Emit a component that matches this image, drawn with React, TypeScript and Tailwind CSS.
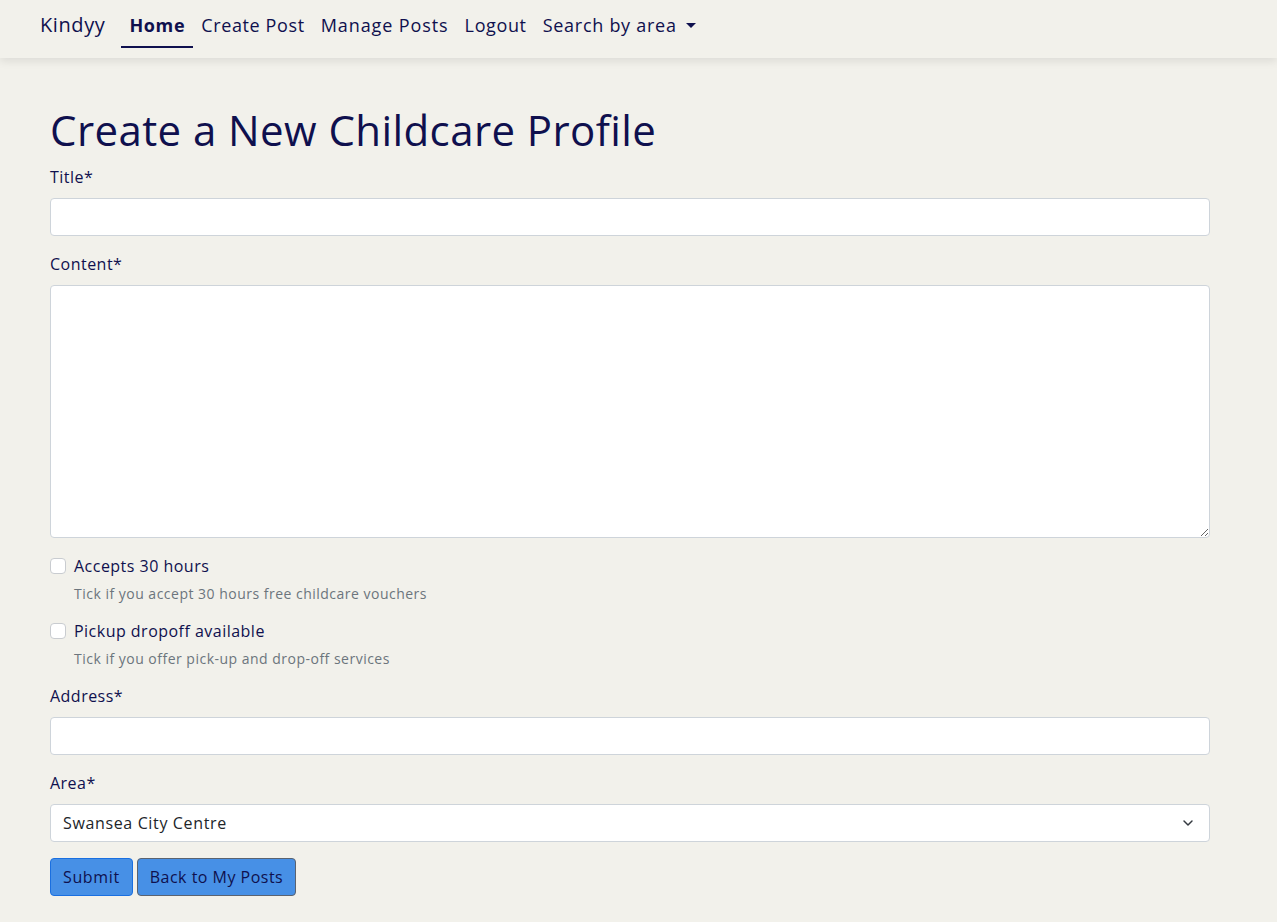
import { ChevronDown } from "lucide-react";

const font = { fontFamily: '"Open Sans", "Liberation Sans", sans-serif' };

function Field({ label, children }: { label: string; children: React.ReactNode }) {
  return (
    <div className="mb-4">
      <label className="mb-[9px] block text-[16px] leading-[24px] tracking-[0.03em]">{label}</label>
      {children}
    </div>
  );
}

function Check({ label, help }: { label: string; help: string }) {
  return (
    <div className="mb-[15px]">
      <div className="flex items-center gap-2 text-[16px] leading-[24px] tracking-[0.03em]">
        <input
          type="checkbox"
          className="h-4 w-4 appearance-none rounded border border-[#c9ccd0] bg-white"
        />
        <span>{label}</span>
      </div>
      <div className="mt-[6px] pl-6 text-[14px] leading-[20px] tracking-[0.035em] text-[#6c757d]">
        {help}
      </div>
    </div>
  );
}

export default function App() {
  return (
    <div className="min-h-[922px] bg-[#f2f1eb] text-[#0f104e]" style={font}>
      <nav className="flex h-[58px] items-center bg-[#f2f1eb] pb-2 pl-10 shadow-[0_4px_8px_rgba(0,0,0,0.08)]">
        <span className="mr-4 text-[20px] leading-[26px] tracking-[0.03em]">Kindyy</span>
        <div className="flex items-center text-[18px] leading-[26px] tracking-[0.035em]">
          <a className="px-2">
            <span className="relative font-bold">
              Home
              <span className="absolute -left-2 -right-2 top-[33px] h-[2px] bg-[#0f104e]" />
            </span>
          </a>
          <a className="px-2">Create Post</a>
          <a className="px-2 tracking-[0.05em]">Manage Posts</a>
          <a className="px-2">Logout</a>
          <a className="flex items-center px-2 tracking-[0.04em]">
            Search by area
            <span className="ml-[9px] inline-block h-0 w-0 border-x-[5px] border-t-[5px] border-x-transparent border-t-[#0f104e]" />
          </a>
        </div>
      </nav>

      <main className="box-content w-[1160px] pl-[50px] pt-[48px]">
        <h1 className="mb-[11px] text-[42px] leading-[48px] tracking-[0.01em]">
          Create a New Childcare Profile
        </h1>

        <Field label="Title*">
          <input className="block h-[38px] w-full rounded-[4px] border border-[#ced4da] bg-white" />
        </Field>

        <Field label="Content*">
          <textarea className="block h-[253px] w-full rounded-[4px] border border-[#ced4da] bg-white" />
        </Field>

        <Check label="Accepts 30 hours" help="Tick if you accept 30 hours free childcare vouchers" />
        <Check label="Pickup dropoff available" help="Tick if you offer pick-up and drop-off services" />

        <Field label="Address*">
          <input className="block h-[38px] w-full rounded-[4px] border border-[#ced4da] bg-white" />
        </Field>

        <Field label="Area*">
          <div className="flex h-[38px] w-full items-center justify-between rounded-[4px] border border-[#ced4da] bg-white pl-3 pr-[13px] text-[16px] tracking-[0.04em] text-[#212529]">
            <span>Swansea City Centre</span>
            <ChevronDown size={16} strokeWidth={2.2} className="text-[#343a40]" />
          </div>
        </Field>

        <div className="flex gap-1">
          <button className="h-[38px] rounded-[4px] border border-[#1a6fe0] bg-[#4790e6] px-3 text-[16px] tracking-[0.04em] text-[#0f104e]">
            Submit
          </button>
          <button className="h-[38px] rounded-[4px] border border-[#5b6370] bg-[#4790e6] px-3 text-[16px] tracking-[0.03em] text-[#0f104e]">
            Back to My Posts
          </button>
        </div>
      </main>
    </div>
  );
}
